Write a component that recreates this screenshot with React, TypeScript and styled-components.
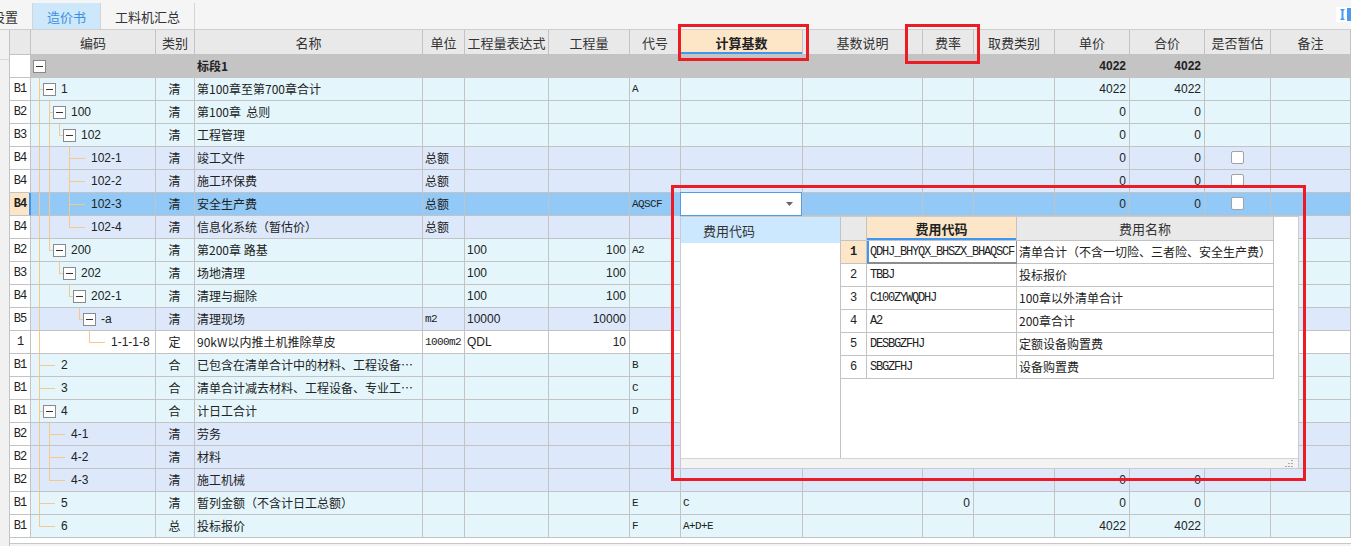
import React from 'react';
import styled, { createGlobalStyle, css } from 'styled-components';

const GlobalStyle = createGlobalStyle`
  html, body { margin: 0; padding: 0; background: #fff; }
  body {
    font-family: "Liberation Sans", "Noto Sans CJK SC", sans-serif;
    font-size: 12px;
    color: #222;
  }
`;

const LINE = '#c3c3c3';
const PEACH = '#fde6c8';
const BLUE = '#3e97f0';
const TREE = '#f7c88b';
const MONO = `"Liberation Mono", "Noto Sans CJK SC", monospace`;

const colWidths = [21, 125, 39, 228, 42, 84, 81, 51, 122, 120, 51, 81, 75, 75, 66, 80];
const gridCols = colWidths.map((w) => `${w}px`).join(' ');

type Tone = 'gray' | 'cyan' | 'lav' | 'white' | 'sel';

type RowData = {
  no: string;
  code: string;
  level: number;
  box?: boolean;
  type?: string;
  name: string;
  unit?: string;
  expr?: string;
  qty?: string;
  dh?: string;
  base?: string;
  rate?: string;
  price?: string;
  total?: string;
  check?: boolean;
  tone: Tone;
  bold?: boolean;
};

// rows 102-4 .. 4-2 sit under the open drop-down, so their right-hand values are left out
const rows: RowData[] = [
  { no: '', code: '', level: 0, box: true, name: '标段1', price: '4022', total: '4022', tone: 'gray', bold: true },
  { no: 'B1', code: '1', level: 1, box: true, type: '清', name: '第100章至第700章合计', dh: 'A', price: '4022', total: '4022', tone: 'cyan' },
  { no: 'B2', code: '100', level: 2, box: true, type: '清', name: '第100章\u00a0 总则', price: '0', total: '0', tone: 'cyan' },
  { no: 'B3', code: '102', level: 3, box: true, type: '清', name: '工程管理', price: '0', total: '0', tone: 'cyan' },
  { no: 'B4', code: '102-1', level: 4, type: '清', name: '竣工文件', unit: '总额', price: '0', total: '0', check: true, tone: 'lav' },
  { no: 'B4', code: '102-2', level: 4, type: '清', name: '施工环保费', unit: '总额', price: '0', total: '0', check: true, tone: 'lav' },
  { no: 'B4', code: '102-3', level: 4, type: '清', name: '安全生产费', unit: '总额', dh: 'AQSCF', price: '0', total: '0', check: true, tone: 'sel' },
  { no: 'B4', code: '102-4', level: 4, type: '清', name: '信息化系统（暂估价）', unit: '总额', tone: 'lav' },
  { no: 'B2', code: '200', level: 2, box: true, type: '清', name: '第200章 路基', expr: '100', qty: '100', dh: 'A2', tone: 'cyan' },
  { no: 'B3', code: '202', level: 3, box: true, type: '清', name: '场地清理', expr: '100', qty: '100', tone: 'cyan' },
  { no: 'B4', code: '202-1', level: 4, box: true, type: '清', name: '清理与掘除', expr: '100', qty: '100', tone: 'cyan' },
  { no: 'B5', code: '-a', level: 5, box: true, type: '清', name: '清理现场', unit: 'm2', expr: '10000', qty: '10000', tone: 'lav' },
  { no: '1', code: '1-1-1-8', level: 6, type: '定', name: '90kW以内推土机推除草皮', unit: '1000m2', expr: 'QDL', qty: '10', tone: 'white' },
  { no: 'B1', code: '2', level: 1, type: '合', name: '已包含在清单合计中的材料、工程设备、专业工程暂估价', dh: 'B', tone: 'cyan' },
  { no: 'B1', code: '3', level: 1, type: '合', name: '清单合计减去材料、工程设备、专业工程暂估价', dh: 'C', tone: 'cyan' },
  { no: 'B1', code: '4', level: 1, box: true, type: '合', name: '计日工合计', dh: 'D', tone: 'cyan' },
  { no: 'B2', code: '4-1', level: 2, type: '清', name: '劳务', tone: 'lav' },
  { no: 'B2', code: '4-2', level: 2, type: '清', name: '材料', tone: 'lav' },
  { no: 'B2', code: '4-3', level: 2, type: '清', name: '施工机械', price: '0', total: '0', tone: 'lav' },
  { no: 'B1', code: '5', level: 1, type: '清', name: '暂列金额（不含计日工总额）', dh: 'E', base: 'C', rate: '0', price: '0', total: '0', tone: 'cyan' },
  { no: 'B1', code: '6', level: 1, type: '总', name: '投标报价', dh: 'F', base: 'A+D+E', price: '4022', total: '4022', tone: 'cyan' },
];

const headers = [
  '', '编码', '类别', '名称', '单位', '工程量表达式', '工程量', '代号', '计算基数',
  '基数说明', '费率', '取费类别', '单价', '合价', '是否暂估', '备注',
];

const feeRows = [
  { code: 'QDHJ_BHYQX_BHSZX_BHAQSCF', name: '清单合计（不含一切险、三者险、安全生产费）' },
  { code: 'TBBJ', name: '投标报价' },
  { code: 'C100ZYWQDHJ', name: '100章以外清单合计' },
  { code: 'A2', name: '200章合计' },
  { code: 'DESBGZFHJ', name: '定额设备购置费' },
  { code: 'SBGZFHJ', name: '设备购置费' },
];

const toneBg: Record<Tone, string> = {
  gray: '#c4c4c4',
  cyan: '#e4f6fb',
  lav: '#dde9fb',
  white: '#ffffff',
  sel: '#92c9f6',
};

/* ---------- page frame ---------- */

const Page = styled.div`
  position: relative;
  width: 1351px;
  height: 546px;
  overflow: hidden;
  background: #fff;
`;

const TabBar = styled.div`
  display: flex;
  height: 30px;
  box-sizing: border-box;
  padding-top: 3px;
  background: #f5f5f5;
  border-bottom: 1px solid #cfcfcf;
`;

const Tab = styled.div<{ $active?: boolean; $first?: boolean }>`
  display: flex;
  align-items: center;
  padding: 0 14px;
  border-right: 1px solid #d4d4d4;
  font-size: 13px;
  color: #333;
  white-space: nowrap;
  ${(p) => p.$first && css`margin-left: -22px;`}
  ${(p) =>
    p.$active &&
    css`
      background: #cde7fb;
      color: #3b8fe0;
    `}
`;

const CornerIcon = styled.div`
  margin-left: auto;
  margin-top: 4px;
  width: 15px;
  height: 15px;
  background: #fff;
  display: flex;
  align-items: center;
`;

const Main = styled.div`
  display: flex;
  height: 516px;
`;

const LeftStrip = styled.div`
  width: 9px;
  background: #f1f1f1;
  box-shadow: inset 0 -1px 0 #f1f1f1;
  background-image: linear-gradient(#f1f1f1 29px, #d8d8d8 29px, #d8d8d8 30px, #f1f1f1 30px);
`;

const Grid = styled.div`
  flex: 1;
  display: flex;
  flex-direction: column;
  border-left: 1px solid ${LINE};
`;

const HeaderRow = styled.div`
  display: grid;
  grid-template-columns: ${gridCols};
  height: 25px;
`;

const HeadCell = styled.div<{ $hi?: boolean }>`
  box-sizing: border-box;
  display: flex;
  align-items: center;
  justify-content: center;
  background: #e9e9e9;
  border-right: 1px solid ${LINE};
  border-bottom: 1px solid ${LINE};
  font-family: "Noto Sans CJK SC", sans-serif;
  font-size: 13px;
  color: #333;
  white-space: nowrap;
  overflow: hidden;
  ${(p) =>
    p.$hi &&
    css`
      background: ${PEACH};
      font-weight: bold;
      color: #222;
      box-shadow: inset 0 -2px 0 ${BLUE};
    `}
`;

const BodyRow = styled.div<{ $tone: Tone }>`
  display: grid;
  grid-template-columns: ${gridCols};
  height: 23px;
  background: ${(p) => toneBg[p.$tone]};
`;

const Cell = styled.div<{ $align?: 'left' | 'center' | 'right'; $mono?: boolean; $bold?: boolean }>`
  box-sizing: border-box;
  display: flex;
  align-items: center;
  min-width: 0;
  padding: 0 3px 1px 2px;
  border-right: 1px solid ${LINE};
  border-bottom: 1px solid ${LINE};
  white-space: nowrap;
  overflow: hidden;
  justify-content: ${(p) =>
    p.$align === 'center' ? 'center' : p.$align === 'right' ? 'flex-end' : 'flex-start'};
  ${(p) =>
    p.$mono &&
    css`
      font-family: ${MONO};
      font-size: 11px;
      letter-spacing: -0.6px;
    `}
  ${(p) => p.$bold && css`font-weight: bold;`}
`;

const NoCell = styled(Cell)<{ $sel?: boolean }>`
  justify-content: center;
  padding: 0 0 1px 0;
  background: ${(p) => (p.$sel ? PEACH : '#fff')};
  font-family: ${MONO};
  font-size: 12px;
  letter-spacing: -1px;
  ${(p) =>
    p.$sel &&
    css`
      font-weight: bold;
      border-right-color: ${BLUE};
      box-shadow: inset -1px 0 0 ${BLUE};
    `}
`;

const TreeCell = styled(Cell)`
  padding: 0;
`;

const NameText = styled.span`
  overflow: hidden;
  text-overflow: ellipsis;
  white-space: nowrap;
  font-family: "Noto Sans CJK SC", sans-serif;
`;

const Check = styled.span`
  width: 13px;
  height: 13px;
  box-sizing: border-box;
  border: 1px solid #a2a2a2;
  border-radius: 2px;
  background: #fff;
`;

const GridEnd = styled.div`
  flex: 1;
  background: #fff;
  box-shadow: inset 0 -2px 0 #f3f3f3, inset 0 -3px 0 #c8c8c8;
`;

/* ---------- overlays ---------- */

const Combo = styled.div`
  position: absolute;
  left: 680px;
  top: 192px;
  width: 122px;
  height: 24px;
  box-sizing: border-box;
  border: 1px solid #4e9de9;
  background: #fff;
  display: flex;
  align-items: center;
  justify-content: flex-end;
  padding-right: 8px;
`;

const Popup = styled.div`
  position: absolute;
  left: 680px;
  top: 216px;
  width: 619px;
  height: 253px;
  box-sizing: border-box;
  border: 1px solid #cbcbcb;
  background: #fff;
  display: flex;
  flex-direction: column;
`;

const PopBody = styled.div`
  flex: 1;
  display: flex;
  min-height: 0;
`;

const SideList = styled.div`
  width: 160px;
  box-sizing: border-box;
  border-right: 1px solid ${LINE};
`;

const SideItem = styled.div<{ $active?: boolean }>`
  height: 26px;
  display: flex;
  align-items: center;
  padding-left: 22px;
  font-family: "Noto Sans CJK SC", sans-serif;
  font-size: 13px;
  color: #333;
  background: ${(p) => (p.$active ? '#cce8ff' : 'transparent')};
`;

const popCols = '26px 150px 257px';

const PopGrid = styled.div`
  flex: 1;
`;

const PopHeader = styled.div`
  display: grid;
  grid-template-columns: ${popCols};
  height: 24px;
`;

const PopRow = styled.div`
  display: grid;
  grid-template-columns: ${popCols};
  height: 23px;
`;

const PopHead = styled(HeadCell)`
  font-size: 13px;
`;

const PopNo = styled(Cell)<{ $sel?: boolean }>`
  justify-content: center;
  padding: 0 0 1px 0;
  font-family: ${MONO};
  font-size: 12px;
  ${(p) =>
    p.$sel &&
    css`
      background: ${PEACH};
      font-weight: bold;
    `}
`;

const PopCode = styled(Cell)<{ $focus?: boolean }>`
  font-family: ${MONO};
  font-size: 12px;
  letter-spacing: -1.2px;
  padding-left: 3px;
  ${(p) =>
    p.$focus &&
    css`
      border-right-color: #8c8c8c;
      border-bottom-color: #8c8c8c;
      box-shadow: inset 2px 0 0 ${BLUE}, inset 0 -1px 0 #8c8c8c;
    `}
`;

const PopName = styled(Cell)`
  font-family: "Noto Sans CJK SC", sans-serif;
`;

const PopFooter = styled.div`
  height: 10px;
  box-sizing: border-box;
  border-top: 1px solid #d4d4d4;
  background: #f3f3f3;
  display: flex;
  justify-content: flex-end;
  align-items: flex-end;
  padding: 0 5px 1px 0;
`;

const RedFrame = styled.div<{ $x: number; $y: number; $w: number; $h: number }>`
  position: absolute;
  left: ${(p) => p.$x}px;
  top: ${(p) => p.$y}px;
  width: ${(p) => p.$w}px;
  height: ${(p) => p.$h}px;
  box-sizing: border-box;
  border: 3px solid #ec1c24;
  pointer-events: none;
`;

/* ---------- tree guides ---------- */

function isLastSibling(idx: number) {
  const lv = rows[idx].level;
  for (let j = idx + 1; j < rows.length; j++) {
    if (rows[j].level < lv) return true;
    if (rows[j].level === lv) return false;
  }
  return true;
}

function TreeGuide({ index }: { index: number }) {
  const row = rows[index];
  const L = row.level;
  const w = 20 + 10 * L;
  const passLevels: number[] = [];
  let cur = L;
  for (let j = index - 1; j >= 0 && cur > 1; j--) {
    if (rows[j].level < cur) {
      cur = rows[j].level;
      if (cur >= 1 && !isLastSibling(j)) passLevels.push(cur);
    }
  }
  const last = isLastSibling(index);
  const px = 10 * L - 2 + 0.5;
  const boxX = 2 + 10 * L;
  return (
    <svg width={w} height={22} style={{ flex: 'none' }} shapeRendering="crispEdges">
      {passLevels.map((k) => (
        <line key={k} x1={10 * k - 1.5} y1={0} x2={10 * k - 1.5} y2={22} stroke={TREE} />
      ))}
      {L > 0 && (
        <>
          <line x1={px} y1={0} x2={px} y2={last ? 11.5 : 22} stroke={TREE} />
          <line x1={px} y1={11.5} x2={row.box ? boxX : boxX + 12} y2={11.5} stroke={TREE} />
        </>
      )}
      {row.box && (
        <>
          <rect x={boxX + 0.5} y={5.5} width={12} height={12} fill="#fff" stroke="#8a8a8a" />
          <line x1={boxX + 3} y1={11.5} x2={boxX + 10} y2={11.5} stroke="#333" />
        </>
      )}
    </svg>
  );
}

/* ---------- app ---------- */

export default function App() {
  return (
    <Page>
      <GlobalStyle />
      <TabBar>
        <Tab $first>设置</Tab>
        <Tab $active>造价书</Tab>
        <Tab>工料机汇总</Tab>
        <CornerIcon>
          <svg width="15" height="15" viewBox="0 0 15 15">
            <path d="M4 2h5l-1.5 2v7L9 13H4l1.5-2V4z" fill="#4a9bf0" />
            <rect x="11" y="1" width="4" height="13" fill="#4a9bf0" />
          </svg>
        </CornerIcon>
      </TabBar>
      <Main>
        <LeftStrip />
        <Grid>
          <HeaderRow>
            {headers.map((h, i) => (
              <HeadCell key={i} $hi={h === '计算基数'}>
                {h}
              </HeadCell>
            ))}
          </HeaderRow>
          {rows.map((r, i) => (
            <BodyRow key={i} $tone={r.tone}>
              <NoCell $sel={r.tone === 'sel'}>{r.no}</NoCell>
              <TreeCell>
                <TreeGuide index={i} />
                {r.code}
              </TreeCell>
              <Cell $align="center">
                <NameText>{r.type}</NameText>
              </Cell>
              <Cell $bold={r.bold}>
                <NameText>{r.name}</NameText>
              </Cell>
              <Cell $mono={r.unit !== '总额'}>
                {r.unit === '总额' ? <NameText>{r.unit}</NameText> : r.unit}
              </Cell>
              <Cell>{r.expr}</Cell>
              <Cell $align="right">{r.qty}</Cell>
              <Cell $mono>{r.dh}</Cell>
              <Cell $mono>{r.base}</Cell>
              <Cell />
              <Cell $align="right">{r.rate}</Cell>
              <Cell />
              <Cell $align="right" $bold={r.bold}>{r.price}</Cell>
              <Cell $align="right" $bold={r.bold}>{r.total}</Cell>
              <Cell $align="center">{r.check && <Check />}</Cell>
              <Cell />
            </BodyRow>
          ))}
          <GridEnd />
        </Grid>
      </Main>

      <Combo>
        <svg width="7" height="4" viewBox="0 0 7 4">
          <path d="M0 0h7L3.5 4z" fill="#666" />
        </svg>
      </Combo>

      <Popup>
        <PopBody>
          <SideList>
            <SideItem $active>费用代码</SideItem>
          </SideList>
          <PopGrid>
            <PopHeader>
              <PopHead />
              <PopHead $hi>费用代码</PopHead>
              <PopHead>费用名称</PopHead>
            </PopHeader>
            {feeRows.map((f, i) => (
              <PopRow key={f.code}>
                <PopNo $sel={i === 0}>{i + 1}</PopNo>
                <PopCode $focus={i === 0}>{f.code}</PopCode>
                <PopName>{f.name}</PopName>
              </PopRow>
            ))}
          </PopGrid>
        </PopBody>
        <PopFooter>
          <svg width="8" height="7" viewBox="0 0 8 7">
            <rect x="6" y="0" width="2" height="1" fill="#aaa" />
            <rect x="3" y="3" width="2" height="1" fill="#aaa" />
            <rect x="6" y="3" width="2" height="1" fill="#aaa" />
            <rect x="0" y="6" width="2" height="1" fill="#aaa" />
            <rect x="3" y="6" width="2" height="1" fill="#aaa" />
            <rect x="6" y="6" width="2" height="1" fill="#aaa" />
          </svg>
        </PopFooter>
      </Popup>

      <RedFrame $x={678} $y={24} $w={131} $h={37} />
      <RedFrame $x={905} $y={24} $w={75} $h={40} />
      <RedFrame $x={671} $y={185} $w={635} $h={296} />
    </Page>
  );
}
